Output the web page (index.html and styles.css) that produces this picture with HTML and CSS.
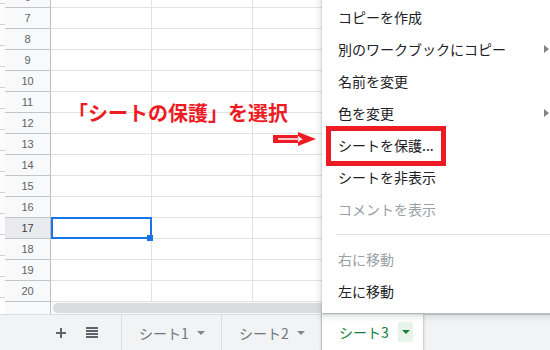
FILE: index.html
```html
<!doctype html>
<html>
    <head>
        <meta charset="utf-8">
        <link rel="stylesheet" href="styles.css">
    </head>
    <body>
        <div class="sheet">
            <div class="grid">
                <div class="strip"></div>
                <div class="rows">
                    <div class="row"><div class="rh">6</div><div class="cell"></div><div class="cell"></div><div class="cell"></div><div class="cell"></div><div class="cell"></div></div>
                    <div class="row"><div class="rh">7</div><div class="cell"></div><div class="cell"></div><div class="cell"></div><div class="cell"></div><div class="cell"></div></div>
                    <div class="row"><div class="rh">8</div><div class="cell"></div><div class="cell"></div><div class="cell"></div><div class="cell"></div><div class="cell"></div></div>
                    <div class="row"><div class="rh">9</div><div class="cell"></div><div class="cell"></div><div class="cell"></div><div class="cell"></div><div class="cell"></div></div>
                    <div class="row"><div class="rh">10</div><div class="cell"></div><div class="cell"></div><div class="cell"></div><div class="cell"></div><div class="cell"></div></div>
                    <div class="row"><div class="rh">11</div><div class="cell"></div><div class="cell"></div><div class="cell"></div><div class="cell"></div><div class="cell"></div></div>
                    <div class="row"><div class="rh">12</div><div class="cell"></div><div class="cell"></div><div class="cell"></div><div class="cell"></div><div class="cell"></div></div>
                    <div class="row"><div class="rh">13</div><div class="cell"></div><div class="cell"></div><div class="cell"></div><div class="cell"></div><div class="cell"></div></div>
                    <div class="row"><div class="rh">14</div><div class="cell"></div><div class="cell"></div><div class="cell"></div><div class="cell"></div><div class="cell"></div></div>
                    <div class="row"><div class="rh">15</div><div class="cell"></div><div class="cell"></div><div class="cell"></div><div class="cell"></div><div class="cell"></div></div>
                    <div class="row"><div class="rh">16</div><div class="cell"></div><div class="cell"></div><div class="cell"></div><div class="cell"></div><div class="cell"></div></div>
                    <div class="row"><div class="rh active">17</div><div class="cell selected"><span class="handle"></span></div><div class="cell"></div><div class="cell"></div><div class="cell"></div><div class="cell"></div></div>
                    <div class="row"><div class="rh">18</div><div class="cell"></div><div class="cell"></div><div class="cell"></div><div class="cell"></div><div class="cell"></div></div>
                    <div class="row"><div class="rh">19</div><div class="cell"></div><div class="cell"></div><div class="cell"></div><div class="cell"></div><div class="cell"></div></div>
                    <div class="row"><div class="rh">20</div><div class="cell"></div><div class="cell"></div><div class="cell"></div><div class="cell"></div><div class="cell"></div></div>
                </div>
            </div>
            <div class="hscroll">
                <div class="hs-strip"></div>
                <div class="hs-corner"></div>
                <div class="thumb"></div>
            </div>
            <div class="tabbar">
                <div class="tools">
                    <svg width="10" height="10" viewBox="0 0 10 10"><path d="M4 0h2v4h4v2H6v4H4V6H0V4h4z" fill="#5f6368"/></svg>
                    <svg width="12" height="11" viewBox="0 0 12 11"><path d="M0 0h12v2H0zM0 3h12v2H0zM0 6h12v2H0zM0 9h12v2H0z" fill="#5f6368"/></svg>
                </div>
                <div class="tab"><span>シート1</span><i class="caret"></i></div>
                <div class="tab"><span>シート2</span><i class="caret"></i></div>
                <div class="tab current"><span>シート3</span><b class="dd"><i class="caret"></i></b></div>
            </div>
        </div>

        <div class="menu">
            <div class="mi">コピーを作成</div>
            <div class="mi">別のワークブックにコピー<i class="sub"></i></div>
            <div class="mi">名前を変更</div>
            <div class="mi">色を変更<i class="sub"></i></div>
            <div class="mi">シートを保護...</div>
            <div class="mi">シートを非表示</div>
            <div class="mi off">コメントを表示</div>
            <div class="sep"></div>
            <div class="mi off">右に移動</div>
            <div class="mi">左に移動</div>
        </div>

        <!-- 注釈 -->
        <div class="note">「シートの保護」を選択</div>
        <svg class="pointer" width="44" height="14" viewBox="0 0 44 14">
            <path d="M0 3h25V0l18 7-18 7v-3H0z" fill="#ed1c24"/>
            <path d="M5 7h23l-3-2.5M28 7l-3 2.5" stroke="#fff" stroke-width="1.4" fill="none"/>
        </svg>
        <div class="mark"></div>
    </body>
</html>
```

FILE: styles.css
```css
body {
    margin: 0;
    width: 550px;
    height: 350px;
    overflow: hidden;
    position: relative;
    background: #fff;
    font-family: "Noto Sans CJK JP", sans-serif;
}
.sheet {
    display: flex;
    flex-direction: column;
    height: 350px;
}
.grid {
    display: flex;
    margin-top: -13px;
}
.strip {
    width: 5px;
    flex: none;
    background: repeating-linear-gradient(to bottom, #fcfcfc 0, #fcfcfc 20px, #d0d0d0 20px, #d0d0d0 21px);
    background-position: 0 -4px;
}
.rows {
    flex: 1;
    overflow: hidden;
}
.row {
    display: flex;
    height: 21px;
}
.rh {
    flex: none;
    width: 46px;
    box-sizing: border-box;
    border-right: 1px solid #c0c0c0;
    border-bottom: 1px solid #c4c4c4;
    background: #f8f9fa;
    color: #5f6368;
    font: 11px "Liberation Sans", Arial, sans-serif;
    line-height: 20px;
    text-align: center;
}
.rh.active {
    background: #e8eaed;
    color: #3c4043;
}
.cell {
    flex: none;
    width: 101px;
    box-sizing: border-box;
    border-right: 1px solid #e2e2e2;
    border-bottom: 1px solid #e2e2e2;
    position: relative;
}
.selected::after {
    content: '';
    position: absolute;
    left: 0;
    top: -1px;
    width: 101px;
    height: 22px;
    box-sizing: border-box;
    border: 2px solid #1a73e8;
}
.handle {
    position: absolute;
    right: -2px;
    bottom: -3px;
    width: 6px;
    height: 6px;
    background: #1a73e8;
    z-index: 1;
}
.hscroll {
    display: flex;
    height: 12px;
    background: #f8f9fa;
}
.hs-strip {
    width: 5px;
    background: #fff;
}
.hs-corner {
    width: 46px;
    box-sizing: border-box;
    border-right: 1px solid #c0c0c0;
}
.thumb {
    flex: 1;
    margin: 1px 0 1px 2px;
    background: #dadce0;
    border-radius: 5px 0 0 5px;
}
.tabbar {
    flex: 1;
    display: flex;
    background: #f1f3f4;
    border-top: 1px solid #dadce0;
    font-size: 14px;
}
.tools {
    width: 122px;
    box-sizing: border-box;
    border-right: 1px solid #dadce0;
    display: flex;
    align-items: center;
    padding-left: 56px;
    gap: 20px;
}
.tab {
    width: 100px;
    box-sizing: border-box;
    display: flex;
    align-items: center;
    justify-content: space-between;
    padding: 0 16px 0 17px;
    border-right: 1px solid #dadce0;
    color: #70757a;
}
.caret {
    display: block;
    width: 0;
    height: 0;
    border-left: 4px solid transparent;
    border-right: 4px solid transparent;
    border-top: 4px solid #80868b;
}
.tab.current {
    width: 101px;
    background: #fff;
    color: #188038;
    padding-right: 10px;
    border-right: 0;
    margin-top: -1px;
    box-shadow: 0 1px 3px 1px rgba(60, 64, 67, 0.15), 0 1px 2px rgba(60, 64, 67, 0.3);
}
.dd {
    width: 15px;
    height: 20px;
    border-radius: 2px;
    background: #e6f4ea;
    display: flex;
    align-items: center;
    justify-content: center;
}
.dd .caret {
    border-top-color: #188038;
}
.menu {
    position: absolute;
    left: 322px;
    top: -5px;
    width: 236px;
    padding: 6px 0;
    background: #fff;
    box-shadow: 0 2px 6px 2px rgba(60, 64, 67, 0.15), 0 1px 2px rgba(60, 64, 67, 0.3);
    z-index: 2;
}
.mi {
    height: 32px;
    padding-left: 16px;
    display: flex;
    align-items: center;
    justify-content: space-between;
    font-size: 14px;
    color: #202124;
}
.mi.off {
    color: #9aa0a6;
}
.sub {
    width: 0;
    height: 0;
    border-top: 4px solid transparent;
    border-bottom: 4px solid transparent;
    border-left: 5px solid #80868b;
    margin-right: 9px;
}
.sep {
    height: 1px;
    margin: 9px 0 8px 14px;
    background: #dadce0;
}
.note {
    position: absolute;
    left: 68px;
    top: 99px;
    font-size: 20px;
    font-weight: bold;
    line-height: 28px;
    color: #ed1c24;
    white-space: nowrap;
}
.pointer {
    position: absolute;
    left: 273px;
    top: 132px;
}
.mark {
    position: absolute;
    left: 326px;
    top: 126px;
    width: 120px;
    height: 40px;
    box-sizing: border-box;
    border: 5px solid #ed1c24;
    z-index: 3;
}
```
